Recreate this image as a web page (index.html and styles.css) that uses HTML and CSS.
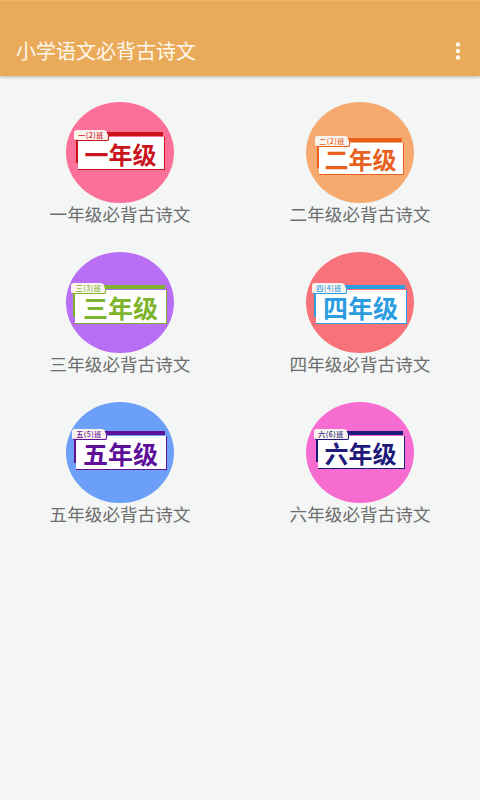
FILE: index.html
```html
<!DOCTYPE html>
<html lang="zh-CN">
<head>
<meta charset="utf-8">
<title>小学语文必背古诗文</title>
<link rel="stylesheet" href="styles.css">
</head>
<body>
<header class="appbar">
  <h1 class="title">小学语文必背古诗文</h1>
  <svg class="more" width="6" height="18" viewBox="0 0 6 18" aria-hidden="true"><circle cx="3" cy="2.5" r="2.3"/><circle cx="3" cy="9" r="2.3"/><circle cx="3" cy="15.5" r="2.3"/></svg>
</header>
<main class="grid">
  <a class="cell g1">
    <div class="circle"><div class="badge"><span class="tab">一(2)班</span><div class="bar"></div><div class="card">一年级</div></div></div>
    <p class="label">一年级必背古诗文</p>
  </a>
  <a class="cell g2">
    <div class="circle"><div class="badge"><span class="tab">二(2)班</span><div class="bar"></div><div class="card">二年级</div></div></div>
    <p class="label">二年级必背古诗文</p>
  </a>
  <a class="cell g3">
    <div class="circle"><div class="badge"><span class="tab">三(3)班</span><div class="bar"></div><div class="card">三年级</div></div></div>
    <p class="label">三年级必背古诗文</p>
  </a>
  <a class="cell g4">
    <div class="circle"><div class="badge"><span class="tab">四(4)班</span><div class="bar"></div><div class="card">四年级</div></div></div>
    <p class="label">四年级必背古诗文</p>
  </a>
  <a class="cell g5">
    <div class="circle"><div class="badge"><span class="tab">五(5)班</span><div class="bar"></div><div class="card">五年级</div></div></div>
    <p class="label">五年级必背古诗文</p>
  </a>
  <a class="cell g6">
    <div class="circle"><div class="badge"><span class="tab">六(6)班</span><div class="bar"></div><div class="card">六年级</div></div></div>
    <p class="label">六年级必背古诗文</p>
  </a>
</main>
</body>
</html>
```
FILE: styles.css
```css
* { box-sizing: border-box; }
html, body { height: 100%; }
body {
  margin: 0;
  background: #f4f6f6;
  font-family: "Noto Sans CJK SC", "Noto Sans", sans-serif;
  overflow: hidden;
}
.appbar {
  height: 76px;
  padding: 24px 19px 0 16px;
  display: flex;
  align-items: center;
  justify-content: space-between;
  background: #e9aa5a;
  border-top: 1px solid #efb46c;
  box-shadow: 0 1px 3px rgba(0, 0, 0, 0.28);
}
.title {
  margin: 0;
  font-size: 20px;
  font-weight: 400;
  line-height: 28px;
  color: #fdf8ee;
}
.more { fill: #fdf8ee; }
.grid {
  display: grid;
  grid-template-columns: 240px 240px;
  grid-auto-rows: 150px;
  padding-top: 26px;
}
.cell {
  display: flex;
  flex-direction: column;
  align-items: center;
}
.circle {
  width: 108px;
  height: 101px;
  border-radius: 50%;
  background: var(--bg);
  display: flex;
  align-items: flex-start;
  justify-content: center;
  padding-top: var(--top);
}
.badge {
  position: relative;
  width: var(--w);
  height: var(--h);
  display: flex;
  flex-direction: column;
  color: var(--c);
}
.badge::before {
  content: "";
  position: absolute;
  left: 0;
  top: 6px;
  bottom: 7px;
  width: 2px;
  background: var(--c);
}
.bar {
  height: 4px;
  flex: none;
  margin-left: 2px;
  margin-right: 2px;
  background: var(--c);
}
.card {
  flex: 1;
  margin-top: 1px;
  margin-left: 2px;
  display: flex;
  align-items: center;
  justify-content: center;
  background: #fff;
  border-right: 1px solid var(--c);
  border-bottom: 1px solid var(--c);
  font-size: var(--fs);
  font-weight: 700;
  line-height: 1;
  padding-top: 1px;
}
.tab {
  position: absolute;
  left: -2px;
  top: -2px;
  width: 35px;
  height: 11px;
  background: #fbf4ee;
  border: 1px solid var(--c);
  border-top-color: #fbf4ee;
  border-left-color: #fbf4ee;
  border-radius: 3px 6px 2px 3px;
  font-size: 7px;
  font-weight: 500;
  line-height: 9px;
  letter-spacing: 0.5px;
  text-align: center;
  white-space: nowrap;
}
.label {
  margin: 0;
  font-size: 17.6px;
  line-height: 21px;
  color: #6d6d6d;
  white-space: nowrap;
}
.g1 { --bg: #fb7098; --c: #c9141d; --w: 89px; --h: 38px; --top: 30px; --fs: 24px; }
.g2 { --bg: #f7aa70; --c: #e8611d; --w: 87px; --h: 37px; --top: 36px; --fs: 24px; }
.g3 { --bg: #b86ef5; --c: #7db52c; --w: 94px; --h: 39px; --top: 33px; --fs: 25px; }
.g4 { --bg: #f8727a; --c: #2b9de0; --w: 93px; --h: 39px; --top: 33px; --fs: 25px; }
.g5 { --bg: #6c9ff8; --c: #5f1098; --w: 93px; --h: 39px; --top: 29px; --fs: 25px; }
.g6 { --bg: #f76cd0; --c: #1e1a7c; --w: 89px; --h: 38px; --top: 29px; --fs: 24px; }
```
